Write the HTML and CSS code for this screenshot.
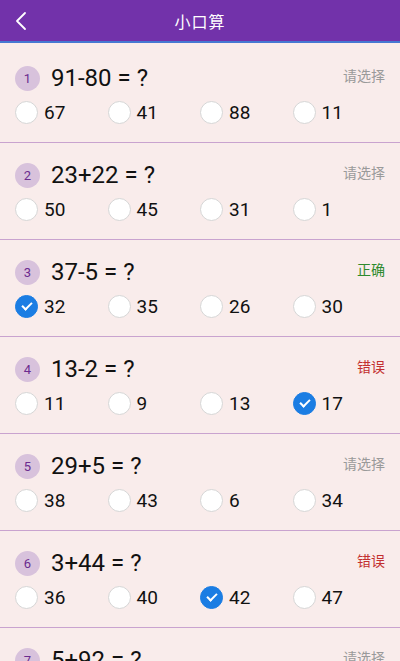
FILE: index.html
```html
<!DOCTYPE html>
<html lang="zh-CN">
<head>
  <meta charset="utf-8"/>
  <meta content="width=device-width, initial-scale=1.0" name="viewport"/>
  <title>小口算</title>
  <link rel="stylesheet" href="styles.css">
</head>
<body>

<header class="topbar">
  <span class="back">
    <svg width="14" height="20" viewBox="0 0 14 20"><path d="M11 2 L3 10 L11 18" fill="none" stroke="#fff" stroke-width="1.8" stroke-linecap="round" stroke-linejoin="round"/></svg>
  </span>
  <h1>小口算</h1>
</header>

<div class="list">

  <div class="item">
    <div class="question">
      <span class="num">1</span>
      <span class="formula">91-80 = ?</span>
      <span class="status">请选择</span>
    </div>
    <div class="options">
      <label class="opt"><span class="radio"></span>67</label>
      <label class="opt"><span class="radio"></span>41</label>
      <label class="opt"><span class="radio"></span>88</label>
      <label class="opt"><span class="radio"></span>11</label>
    </div>
  </div>

  <div class="item">
    <div class="question">
      <span class="num">2</span>
      <span class="formula">23+22 = ?</span>
      <span class="status">请选择</span>
    </div>
    <div class="options">
      <label class="opt"><span class="radio"></span>50</label>
      <label class="opt"><span class="radio"></span>45</label>
      <label class="opt"><span class="radio"></span>31</label>
      <label class="opt"><span class="radio"></span>1</label>
    </div>
  </div>

  <div class="item">
    <div class="question">
      <span class="num">3</span>
      <span class="formula">37-5 = ?</span>
      <span class="status right">正确</span>
    </div>
    <div class="options">
      <label class="opt"><span class="radio checked"></span>32</label>
      <label class="opt"><span class="radio"></span>35</label>
      <label class="opt"><span class="radio"></span>26</label>
      <label class="opt"><span class="radio"></span>30</label>
    </div>
  </div>

  <div class="item">
    <div class="question">
      <span class="num">4</span>
      <span class="formula">13-2 = ?</span>
      <span class="status wrong">错误</span>
    </div>
    <div class="options">
      <label class="opt"><span class="radio"></span>11</label>
      <label class="opt"><span class="radio"></span>9</label>
      <label class="opt"><span class="radio"></span>13</label>
      <label class="opt"><span class="radio checked"></span>17</label>
    </div>
  </div>

  <div class="item">
    <div class="question">
      <span class="num">5</span>
      <span class="formula">29+5 = ?</span>
      <span class="status">请选择</span>
    </div>
    <div class="options">
      <label class="opt"><span class="radio"></span>38</label>
      <label class="opt"><span class="radio"></span>43</label>
      <label class="opt"><span class="radio"></span>6</label>
      <label class="opt"><span class="radio"></span>34</label>
    </div>
  </div>

  <div class="item">
    <div class="question">
      <span class="num">6</span>
      <span class="formula">3+44 = ?</span>
      <span class="status wrong">错误</span>
    </div>
    <div class="options">
      <label class="opt"><span class="radio"></span>36</label>
      <label class="opt"><span class="radio"></span>40</label>
      <label class="opt"><span class="radio checked"></span>42</label>
      <label class="opt"><span class="radio"></span>47</label>
    </div>
  </div>

  <div class="item">
    <div class="question">
      <span class="num">7</span>
      <span class="formula">5+92 = ?</span>
      <span class="status">请选择</span>
    </div>
  </div>

</div>

</body>
</html>
```

FILE: styles.css
```css
body {
  margin: 0;
  background-color: #f9eceb;
  font-family: Roboto, "Noto Sans CJK SC", sans-serif;
  color: #111;
  overflow: hidden;
}

.topbar {
  position: relative;
  height: 41px;
  background-color: #7232aa;
  border-bottom: 2px solid #4678d2;
  display: flex;
  align-items: center;
  justify-content: center;
}

.topbar h1 {
  margin: 0;
  font-size: 16px;
  font-weight: normal;
  color: #fff;
  letter-spacing: 1px;
}

.back {
  position: absolute;
  left: 14px;
  top: 11px;
  display: flex;
}

.list {
  padding-top: 3px;
}

.item {
  padding: 18px 15px 18px 15px;
  border-bottom: 1px solid #c9a3cf;
}

.question {
  display: flex;
  align-items: center;
  height: 28px;
  margin-bottom: 8px;
}

.num {
  width: 25px;
  height: 25px;
  border-radius: 50%;
  background-color: #d8c2dc;
  color: #6b2b8f;
  font-size: 13px;
  display: flex;
  align-items: center;
  justify-content: center;
  margin-right: 11px;
}

.formula {
  font-size: 24px;
  flex: 1;
}

.status {
  font-size: 14px;
  color: #9a9a9a;
  margin-top: -6px;
}

.status.right {
  color: #2d8a2d;
}

.status.wrong {
  color: #c33030;
}

.options {
  display: grid;
  grid-template-columns: repeat(4, 1fr);
  height: 24px;
}

.opt {
  display: flex;
  align-items: center;
  font-size: 19px;
}

.radio {
  box-sizing: border-box;
  width: 23px;
  height: 23px;
  border-radius: 50%;
  background-color: #fff;
  border: 1px solid #d6d6d6;
  margin-right: 6px;
  position: relative;
}

.radio.checked {
  background-color: #1b7de3;
  border-color: #1b7de3;
}

.radio.checked::after {
  content: "";
  position: absolute;
  left: 6px;
  top: 6px;
  width: 8px;
  height: 4px;
  border-left: 2px solid #fff;
  border-bottom: 2px solid #fff;
  transform: rotate(-45deg);
}
```
